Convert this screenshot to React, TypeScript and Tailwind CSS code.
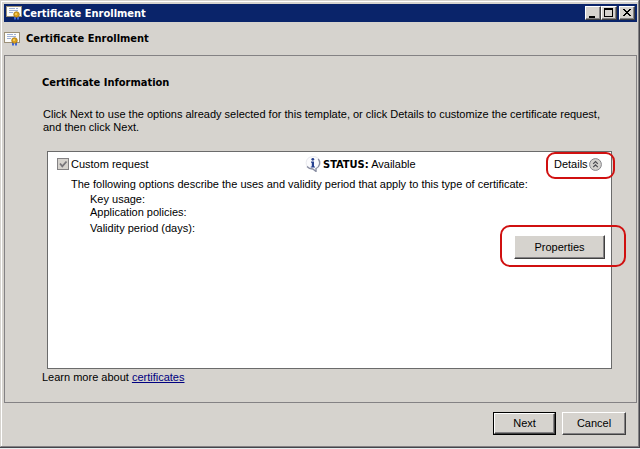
import type { ReactNode } from 'react';

function CertificateIcon() {
  return (
    <svg width="16" height="16" viewBox="0 0 16 16" className="shrink-0" aria-hidden="true">
      <path d="M0 1h16v11H0z" fill="#9c9078" />
      <path d="M1 2h14v9H1z" fill="#fdfdfb" />
      <path d="M3 3.5h6M10 3.5h2M3 5.5h9M3 7.5h4" stroke="#9fb0d6" />
      <path d="M8 10h2v5l-1-1-1 1zM11 10h2v5l-1-1-1 1z" fill="#3f66d6" />
      <circle cx="10.5" cy="9.500" r="2.800" fill="#dda11c" stroke="#9b7010" strokeWidth="0.7" />
      <circle cx="10" cy="9" r="1" fill="#f8d468" />
    </svg>
  );
}

function InfoIcon() {
  return (
    <svg width="16" height="16" viewBox="0 0 16 16" className="shrink-0" aria-hidden="true">
      <path d="M7.5.6A7 6.3 0 0 0 6.500 13l1.500.1 3.400 2.700-.2-3.200A6.800 6.300 0 0 0 7.500.6z" fill="#fbfbfd" stroke="#e2e3ea" strokeWidth="0.800" />
      <path d="M13.200 3a6.300 6.200 0 0 1-2.200 9.500v3L7.800 13Q4 13 2 10.500" fill="none" stroke="#8a8ea2" strokeWidth="1.300" />
      <circle cx="7.800" cy="3.300" r="1.400" fill="#27418f" />
      <path d="M6 5.600h3v4.800h1v1.200H5.800v-1.200h1V6.800H6z" fill="#27418f" />
    </svg>
  );
}

function CollapseIcon() {
  return (
    <svg width="13" height="13" viewBox="0 0 13 13" className="shrink-0" aria-hidden="true">
      <circle cx="6.5" cy="6.5" r="5.9" fill="#d4d2ce" stroke="#85858a" strokeWidth="1" />
      <path d="M4.200 5.800l2.300-2.300 2.300 2.300M4.200 9.200l2.300-2.300 2.300 2.300" fill="none" stroke="#4a4a50" strokeWidth="1.200" />
    </svg>
  );
}

function CaptionButton({ label, children }: { label: string; children: ReactNode }) {
  return (
    <button
      type="button"
      aria-label={label}
      className="h-[14px] w-4 border border-t-white border-l-white border-r-[#404040] border-b-[#404040] bg-[#d6d3ce] shadow-[inset_-1px_-1px_0_#848284]"
    >
      <svg width="14" height="12" viewBox="0 0 14 12" className="block" shapeRendering="crispEdges" aria-hidden="true">
        {children}
      </svg>
    </button>
  );
}

const raised =
  'border border-t-white border-l-white border-r-[#404040] border-b-[#404040] bg-[#d6d3ce] text-center shadow-[inset_-1px_-1px_0_#848284]';

const boldText = "font-['Tahoma','DejaVu_Sans_Condensed','DejaVu_Sans',sans-serif] font-bold";

export default function App() {
  return (
    <div className="min-h-screen bg-[#e9edef] font-['Tahoma','Liberation_Sans',sans-serif] text-[11px] leading-[13px] text-black">
      <div className="border-r border-b border-[#45454b] bg-[#d6d3ce]">
        <div className="border border-t-[#d6d3ce] border-r-[#848284] border-b-[#848284] border-l-[#d6d3ce]">
          <div className="border-t border-l border-white pt-[2px] pr-px pl-[2px]">
            <header className="flex h-[18px] items-center bg-[#0a246a] px-[2px] text-white">
              <CertificateIcon />
              <span className={`ml-px grow ${boldText}`}>Certificate Enrollment</span>
              <CaptionButton label="Minimize">
                <path d="M3 9h6v2H3z" />
              </CaptionButton>
              <CaptionButton label="Maximize">
                <path d="M2 1h9v9H2zM3 3v6h7V3z" fillRule="evenodd" />
              </CaptionButton>
              <span className="w-[2px]" />
              <CaptionButton label="Close">
                <path d="M3 2h2v1h1v1h2V3h1V2h2v1h-1v1H9v1H8v1h1v1h1v1h1v1H9V8H8V7H6v1H5v1H3V8h1V7h1V6h1V5H5V4H4V3H3z" />
              </CaptionButton>
            </header>

            <div className="flex h-[33px] items-center gap-[6px]">
              <CertificateIcon />
              <h1 className={boldText}>Certificate Enrollment</h1>
            </div>

            <main className="border border-[#848284] pt-5 pr-6 pb-[18px] pl-[37px]">
              <h2 className={boldText}>Certificate Information</h2>
              <p className="mt-[19px] mb-[17px] pl-px">
                Click Next to use the options already selected for this template, or click Details to customize the
                certificate request, and then click Next.
              </p>

              <section className="ml-[5px] h-[218px] border border-[#6b6b6b] bg-white">
                <div className="flex items-center pt-1 pl-[9px]">
                  <label className="flex grow items-center gap-[2px]">
                    <span className="relative size-3 shrink-0">
                      <input
                        type="checkbox"
                        defaultChecked
                        disabled
                        className="block size-3 appearance-none border border-[#848284] bg-[#d6d3ce]"
                      />
                      <svg width="12" height="12" viewBox="0 0 12 12" className="absolute inset-0" aria-hidden="true">
                        <path d="M3 5.5l2.3 2.8 4.2-4.8" fill="none" stroke="#77757a" strokeWidth="1.8" />
                      </svg>
                    </span>
                    Custom request
                  </label>
                  <div className="flex w-[249px] items-center">
                    <InfoIcon />
                    <span className="ml-[2px]">
                      <b className={boldText}>STATUS:</b> Available
                    </span>
                  </div>
                  <div className="relative flex w-[57px] items-center">
                    <button type="button" className="flex items-center gap-px">
                      Details
                      <CollapseIcon />
                    </button>
                    <span className="pointer-events-none absolute -top-[6px] -left-[8px] h-[27px] w-[69px] rounded-[9px] border-2 border-[#d01010]" />
                  </div>
                </div>

                <p className="mt-[6px] pl-[23px]">
                  The following options describe the uses and validity period that apply to this type of certificate:
                </p>
                <dl className="mt-[2px] pl-[42px]">
                  <dt>Key usage:</dt>
                  <dt>Application policies:</dt>
                  <dt className="mt-[3px]">Validity period (days):</dt>
                </dl>
                <div className="flex justify-end pr-[6px]">
                  <div className="relative">
                    <button type="button" className={`${raised} block h-6 w-[91px]`}>
                      Properties
                    </button>
                    <span className="pointer-events-none absolute -top-[10px] -left-[14px] h-[42px] w-[126px] rounded-[10px] border-2 border-[#d01010]" />
                  </div>
                </div>
              </section>

              <p className="mt-[2px]">
                Learn more about{' '}
                <a href="#certificates" className="text-[#000080] underline">
                  certificates
                </a>
              </p>
            </main>

            <footer className="flex h-[43px] items-center justify-end gap-[6px] pr-[11px] pb-[2px]">
              <div className="border border-black">
                <button type="button" className={`${raised} block h-[21px] w-[61px]`}>
                  Next
                </button>
              </div>
              <button type="button" className={`${raised} h-[23px] w-16`}>
                Cancel
              </button>
            </footer>
          </div>
        </div>
      </div>
    </div>
  );
}
